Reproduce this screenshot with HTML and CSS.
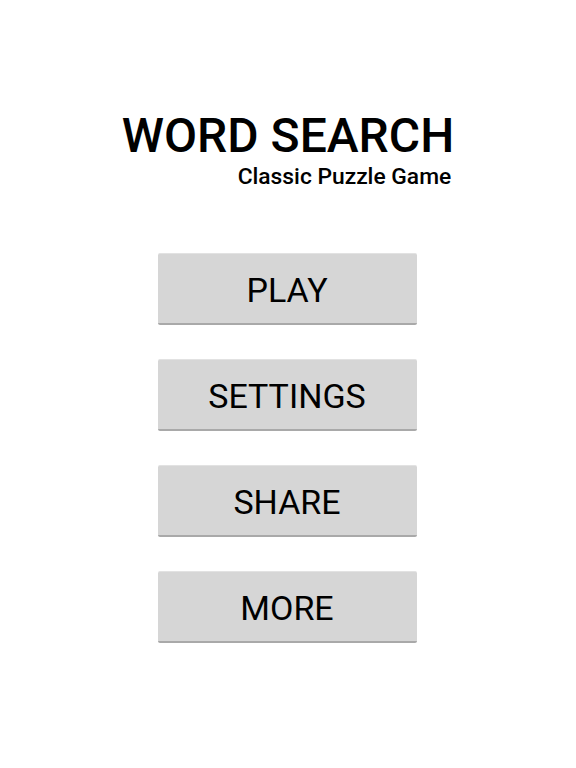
FILE: index.html
```html
<!DOCTYPE html>
<html>
<head>
<meta charset="utf-8">
<link rel="stylesheet" href="styles.css">
</head>
<body>
<div class="screen">
  <header class="title-block">
    <h1 class="title">WORD SEARCH</h1>
    <p class="subtitle">Classic Puzzle Game</p>
  </header>
  <nav class="menu">
    <button class="menu-btn">PLAY</button>
    <button class="menu-btn">SETTINGS</button>
    <button class="menu-btn">SHARE</button>
    <button class="menu-btn">MORE</button>
  </nav>
</div>
</body>
</html>
```
FILE: styles.css
```css
html, body {
  margin: 0;
  padding: 0;
  background: #ffffff;
}
.screen {
  width: 576px;
  height: 768px;
  display: flex;
  flex-direction: column;
  align-items: center;
  font-family: Roboto, "Liberation Sans", sans-serif;
  color: #000;
}
.title-block {
  margin-top: 109px;
  display: flex;
  flex-direction: column;
  align-items: flex-end;
}
.title {
  margin: 0;
  font-size: 48px;
  font-weight: 500;
  line-height: 54px;
  letter-spacing: 0;
}
.subtitle {
  margin: 1.6px 3px 0 0;
  font-size: 22.8px;
  font-weight: 500;
  line-height: 24px;
}
.menu {
  margin-top: 64.4px;
  margin-right: 2px;
  display: flex;
  flex-direction: column;
  gap: 34px;
}
.menu-btn {
  width: 259px;
  height: 72px;
  margin: 0;
  padding: 3px 0 0 0;
  border: none;
  border-top: 1px solid #e2e2e2;
  border-bottom: 2px solid #a9a9a9;
  border-radius: 2px;
  background: #d6d6d6;
  font-family: Roboto, "Liberation Sans", sans-serif;
  font-size: 34px;
  font-weight: 400;
  color: #000;
}
```
